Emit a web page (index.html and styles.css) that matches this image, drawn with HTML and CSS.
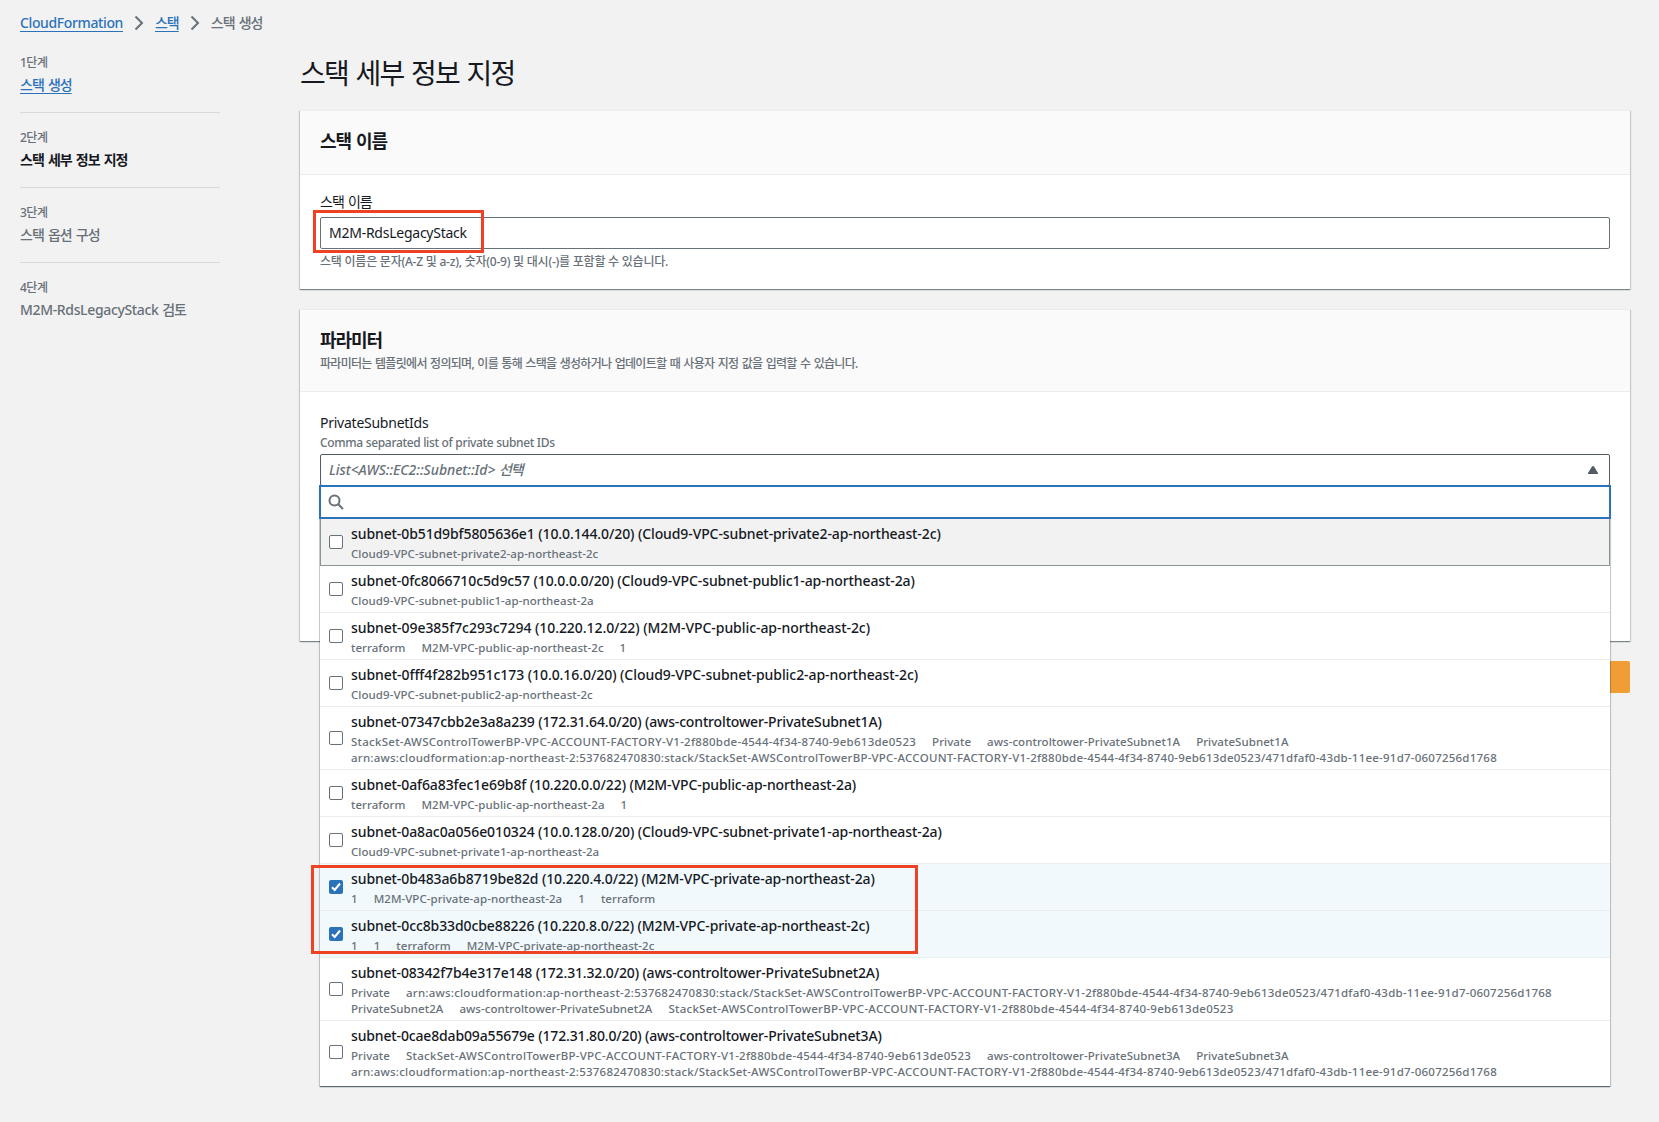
FILE: index.html
```html
<!DOCTYPE html>
<html lang="ko">
<head>
<meta charset="utf-8">
<title>CloudFormation - 스택 생성</title>
<link rel="stylesheet" href="styles.css">
</head>
<body>
<nav class="breadcrumb">
  <a class="link latin" href="#">CloudFormation</a>
  <svg class="chevron" viewBox="0 0 10 16"><path d="M1.5 1.5 8 8l-6.500 6.500"/></svg>
  <a class="link ko" href="#">스택</a>
  <svg class="chevron" viewBox="0 0 10 16"><path d="M1.5 1.5 8 8l-6.500 6.500"/></svg>
  <span class="crumb-current ko">스택 생성</span>
</nav>
<div class="layout">
  <ol class="steps">
    <li class="step"><span class="step-no">1단계</span><a class="step-name link ko" href="#">스택 생성</a></li>
    <li class="step"><span class="step-no">2단계</span><span class="step-name active ko">스택 세부 정보 지정</span></li>
    <li class="step"><span class="step-no">3단계</span><span class="step-name ko">스택 옵션 구성</span></li>
    <li class="step"><span class="step-no">4단계</span><span class="step-name"><span class="latin">M2M-RdsLegacyStack</span> <span class="ko">검토</span></span></li>
  </ol>
  <main class="content">
    <h1 class="page-title">스택 세부 정보 지정</h1>
    <section class="card">
      <header class="card-head"><h2>스택 이름</h2></header>
      <div class="card-body name-body">
        <label class="label ko">스택 이름</label>
        <div class="input"><span class="latin">M2M-RdsLegacyStack</span><i class="mark mark-name"></i></div>
        <p class="hint">스택 이름은 문자(A-Z 및 a-z), 숫자(0-9) 및 대시(-)를 포함할 수 있습니다.</p>
      </div>
    </section>
    <section class="card params">
      <header class="card-head"><h2>파라미터</h2><p class="desc">파라미터는 템플릿에서 정의되며, 이를 통해 스택을 생성하거나 업데이트할 때 사용자 지정 값을 입력할 수 있습니다.</p></header>
      <div class="card-body param-body">
        <label class="label latin">PrivateSubnetIds</label>
        <p class="constraint">Comma separated list of private subnet IDs</p>
        <div class="select"><span class="placeholder">List&lt;AWS::EC2::Subnet::Id&gt; <span class="ko">선택</span></span>
          <svg class="caret" viewBox="0 0 10 8"><path d="M0 8V7L4 .5Q5-.5 6 .5L10 7V8Z"/></svg>
          <div class="dropdown">
            <div class="search"><svg viewBox="0 0 16 16"><circle cx="6.500" cy="6.500" r="5"/><path d="m10.200 10.200 4.800 4.800"/></svg></div>
            <ul class="options">
              <li class="option hover"><i class="box"></i><div><p class="name">subnet-0b51d9bf5805636e1 (10.0.144.0/20) (Cloud9-VPC-subnet-private2-ap-northeast-2c)</p><p class="tags"><span>Cloud9-VPC-subnet-private2-ap-northeast-2c</span></p></div></li>
              <li class="option"><i class="box"></i><div><p class="name">subnet-0fc8066710c5d9c57 (10.0.0.0/20) (Cloud9-VPC-subnet-public1-ap-northeast-2a)</p><p class="tags"><span>Cloud9-VPC-subnet-public1-ap-northeast-2a</span></p></div></li>
              <li class="option"><i class="box"></i><div><p class="name wide">subnet-09e385f7c293c7294 (10.220.12.0/22) (M2M-VPC-public-ap-northeast-2c)</p><p class="tags"><span>terraform</span><span>M2M-VPC-public-ap-northeast-2c</span><span>1</span></p></div></li>
              <li class="option"><i class="box"></i><div><p class="name wide">subnet-0fff4f282b951c173 (10.0.16.0/20) (Cloud9-VPC-subnet-public2-ap-northeast-2c)</p><p class="tags"><span>Cloud9-VPC-subnet-public2-ap-northeast-2c</span></p></div></li>
              <li class="option"><i class="box"></i><div><p class="name tight">subnet-07347cbb2e3a8a239 (172.31.64.0/20) (aws-controltower-PrivateSubnet1A)</p><p class="tags"><span class="stackset">StackSet-AWSControlTowerBP-VPC-ACCOUNT-FACTORY-V1-2f880bde-4544-4f34-8740-9eb613de0523</span><span>Private</span><span>aws-controltower-PrivateSubnet1A</span><span>PrivateSubnet1A</span><span class="arn">arn:aws:cloudformation:ap-northeast-2:537682470830:stack/StackSet-AWSControlTowerBP-VPC-ACCOUNT-FACTORY-V1-2f880bde-4544-4f34-8740-9eb613de0523/471dfaf0-43db-11ee-91d7-0607256d1768</span></p></div></li>
              <li class="option"><i class="box"></i><div><p class="name">subnet-0af6a83fec1e69b8f (10.220.0.0/22) (M2M-VPC-public-ap-northeast-2a)</p><p class="tags"><span>terraform</span><span>M2M-VPC-public-ap-northeast-2a</span><span>1</span></p></div></li>
              <li class="option"><i class="box"></i><div><p class="name">subnet-0a8ac0a056e010324 (10.0.128.0/20) (Cloud9-VPC-subnet-private1-ap-northeast-2a)</p><p class="tags"><span>Cloud9-VPC-subnet-private1-ap-northeast-2a</span></p></div></li>
              <li class="option selected"><i class="box"><svg viewBox="0 0 14 14"><path d="m3 7.300 2.700 2.700L11 3.500"/></svg></i><div><p class="name">subnet-0b483a6b8719be82d (10.220.4.0/22) (M2M-VPC-private-ap-northeast-2a)</p><p class="tags"><span>1</span><span>M2M-VPC-private-ap-northeast-2a</span><span>1</span><span>terraform</span></p></div><i class="mark mark-rows"></i></li>
              <li class="option selected"><i class="box"><svg viewBox="0 0 14 14"><path d="m3 7.300 2.700 2.700L11 3.500"/></svg></i><div><p class="name">subnet-0cc8b33d0cbe88226 (10.220.8.0/22) (M2M-VPC-private-ap-northeast-2c)</p><p class="tags"><span>1</span><span>1</span><span>terraform</span><span>M2M-VPC-private-ap-northeast-2c</span></p></div></li>
              <li class="option"><i class="box"></i><div><p class="name tight">subnet-08342f7b4e317e148 (172.31.32.0/20) (aws-controltower-PrivateSubnet2A)</p><p class="tags"><span>Private</span><span class="arn">arn:aws:cloudformation:ap-northeast-2:537682470830:stack/StackSet-AWSControlTowerBP-VPC-ACCOUNT-FACTORY-V1-2f880bde-4544-4f34-8740-9eb613de0523/471dfaf0-43db-11ee-91d7-0607256d1768</span><span>PrivateSubnet2A</span><span>aws-controltower-PrivateSubnet2A</span><span class="stackset">StackSet-AWSControlTowerBP-VPC-ACCOUNT-FACTORY-V1-2f880bde-4544-4f34-8740-9eb613de0523</span></p></div></li>
              <li class="option"><i class="box"></i><div><p class="name tight">subnet-0cae8dab09a55679e (172.31.80.0/20) (aws-controltower-PrivateSubnet3A)</p><p class="tags"><span>Private</span><span class="stackset">StackSet-AWSControlTowerBP-VPC-ACCOUNT-FACTORY-V1-2f880bde-4544-4f34-8740-9eb613de0523</span><span>aws-controltower-PrivateSubnet3A</span><span>PrivateSubnet3A</span><span class="arn">arn:aws:cloudformation:ap-northeast-2:537682470830:stack/StackSet-AWSControlTowerBP-VPC-ACCOUNT-FACTORY-V1-2f880bde-4544-4f34-8740-9eb613de0523/471dfaf0-43db-11ee-91d7-0607256d1768</span></p></div></li>
            </ul>
          </div>
        </div>
      </div>
    </section>
    <div class="actions"><button class="primary" type="button" aria-label="다음"></button></div>
  </main>
</div>
</body>
</html>
```
FILE: styles.css
```css
* { box-sizing: border-box; margin: 0; padding: 0; }
body {
  height: 1122px;
  overflow: hidden;
  background: #f2f2f2;
  color: #16191f;
  font: 14px/22px "Noto Sans", "Noto Sans CJK KR", sans-serif;
}
ul, ol { list-style: none; }
.ko { letter-spacing: -1px; word-spacing: 1.5px; }
.latin { letter-spacing: -.25px; }
.link { color: #2a73ba; font-weight: 500; text-decoration: underline; text-underline-offset: 3px; }
.link.latin { letter-spacing: -.38px; }
.breadcrumb { display: flex; align-items: center; height: 46px; padding-left: 20px; color: #687078; font-weight: 500; }
.chevron { width: 10px; height: 16px; margin: 0 11px; fill: none; stroke: #687078; stroke-width: 2; }
.layout { display: flex; }
.steps { width: 300px; padding: 7px 80px 0 20px; flex: none; }
.step { height: 75px; color: #687078; font-weight: 500; }
.step + .step { border-top: 1px solid #d5dbdb; padding-top: 15px; margin-top: -16px; height: 91px; }
.step-no { display: block; font-size: 12px; line-height: 20px; letter-spacing: -.5px; }
.step-name { display: block; line-height: 24px; }
.step-name .latin { letter-spacing: -.35px; }
.step-name.active { color: #16191f; font-weight: 700; }
.content { width: 1330px; padding-top: 9px; }
.page-title { font-size: 28px; line-height: 36px; font-weight: 400; margin-bottom: 19px; letter-spacing: -1.8px; word-spacing: 2.1px; }
.card { background: #fff; box-shadow: 0 1px 1px 0 rgba(0,28,36,.3), 1px 1px 1px 0 rgba(0,28,36,.15), -1px 1px 1px 0 rgba(0,28,36,.15); border-top: 1px solid #eaeded; margin-bottom: 20px; height: 179px; }
.card-head { height: 64px; padding: 18px 20px 0; background: #fafafa; border-bottom: 1px solid #eaeded; }
h2 { font-size: 18px; line-height: 24px; font-weight: 700; letter-spacing: -1.1px; word-spacing: 1.5px; }
.card-body { padding: 0 20px; }
.name-body { padding-top: 16px; }
.label { display: block; line-height: 22px; }
.input { position: relative; height: 32px; border: 1px solid #687078; border-radius: 2px; padding: 4px 8px; margin-top: 4px; }
.hint, .constraint, .desc { font-size: 12px; line-height: 20px; color: #687078; }
.hint { margin-top: 3px; font-weight: 500; letter-spacing: -.23px; }
.desc { margin-top: 2px; font-weight: 500; letter-spacing: -.7px; word-spacing: .9px; }
.constraint { margin-top: -1px; font-weight: 500; letter-spacing: -.33px; }
.params { height: 332px; }
.params .card-head { height: 82px; }
.param-body { padding-top: 20px; }
.select { position: relative; height: 32px; border: 1px solid #545b64; border-radius: 2px; padding: 4px 8px; display: flex; justify-content: space-between; margin-top: 1px; }
.placeholder { font-style: italic; font-weight: 500; color: #687078; letter-spacing: -.05px; }
.caret { width: 10px; height: 8px; margin: 7px 3px 0; fill: #545b64; }
.dropdown { position: absolute; z-index: 2; left: -1px; right: -1px; top: 30px; background: #fff; box-shadow: 0 1px 1px 0 rgba(0,28,36,.5), 1px 1px 1px 0 rgba(0,28,36,.15), -1px 1px 1px 0 rgba(0,28,36,.15); }
.search { height: 34px; margin: 0 -1px; border: 2px solid #2a73ba; padding: 7px; }
.search svg { display: block; width: 16px; height: 16px; fill: none; stroke: #687078; stroke-width: 2; }
.option { display: flex; align-items: center; padding: 4px 9px 3px; border-bottom: 1px solid #eaeded; position: relative; }
.option:last-child { border-bottom: 0; padding-bottom: 6px; }
.option.hover { background: #f2f2f2; border: 1px solid #879596; border-top: 0; padding: 4px 8px 3px; }
.option.selected { background: #f1f9fc; }
.box { flex: none; width: 14px; height: 14px; border: 1px solid #687078; border-radius: 2px; margin: 0 8px 2px 0; background: #fff; }
.selected .box { background: #2a73ba; border: 0; }
.box svg { display: block; fill: none; stroke: #fff; stroke-width: 2; }
.name { font-weight: 500; letter-spacing: -.1px; }
.name.wide { letter-spacing: -.06px; }
.name.tight { letter-spacing: -.15px; }
.tags { display: flex; flex-wrap: wrap; column-gap: 16px; margin-top: 1px; font-size: 11.5px; line-height: 16px; font-weight: 500; color: #687078; letter-spacing: .05px; }
.tags .stackset { letter-spacing: .26px; }
.tags .arn { letter-spacing: .228px; }
.mark { position: absolute; border: 3px solid #ef4123; }
.mark-name { left: -8px; top: -8px; width: 171px; height: 43px; }
.mark-rows { left: -9px; top: 1px; width: 607px; height: 89px; z-index: 3; }
.actions { display: flex; justify-content: flex-end; }
.primary { width: 70px; height: 32px; border: 0; border-radius: 2px; background: #f09d36; }
```
